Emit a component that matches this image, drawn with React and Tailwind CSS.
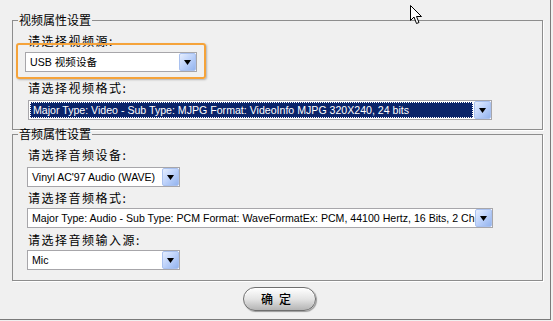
import React from 'react';

const cjk = "font-['SimSun','Noto_Sans_CJK_SC',sans-serif]";
const latin = "font-['Liberation_Sans','Noto_Sans_CJK_SC',sans-serif]";

const ArrowButton = () => (
  <div className="flex w-[17px] shrink-0 items-center justify-center rounded-[2px] border border-[#a9c1ef] bg-gradient-to-br from-[#e6eefe] via-[#bcd1fa] to-[#94b4ee]">
    <svg width="7" height="5" viewBox="0 0 7 5">
      <path d="M0 0 H7 L3.5 5 Z" fill="#000" />
    </svg>
  </div>
);

const Combo = ({ width, text, selected }) => (
  <div className={`flex h-[20px] ${width} border border-[#a7a6aa] bg-white`}>
    {selected ? (
      <div className="m-[1px] flex-1 overflow-hidden bg-[#0a246a] outline-1 outline-dotted outline-white -outline-offset-1">
        <div className={`${latin} whitespace-nowrap pl-[3px] text-[10.6px] leading-[16px] text-white`}>{text}</div>
      </div>
    ) : (
      <div className={`${latin} flex-1 overflow-hidden whitespace-nowrap pl-[4px] text-[10.6px] leading-[18px] text-black`}>
        {text}
      </div>
    )}
    <ArrowButton />
  </div>
);

const Label = ({ children, className = '' }) => (
  <div className={`${cjk} ml-[15px] text-[12px] leading-[14px] tracking-[1.5px] text-black ${className}`}>{children}</div>
);

const Group = ({ title, className = '', children }) => (
  <fieldset className={`w-[531px] border border-[#8d8d8d] shadow-[1px_1px_0_#ffffff] ${className}`}>
    <legend className={`${cjk} ml-[5px] px-[1px] text-[12px] leading-[14px] text-black`}>{title}</legend>
    {children}
  </fieldset>
);

export default function App() {
  return (
    <div className="relative h-[321px] w-[553px] overflow-hidden bg-[#f0f0f0]">
      <div className="flex h-[320px] w-[551px] flex-col border-r border-b border-[#7a7a7a] pl-[12px] pt-[13px]">
        <Group title="视频属性设置" className="h-[117px]">
          <Label className="mt-[7px]">请选择视频源:</Label>
          <div className="ml-[12px] mt-[4px]">
            <Combo width="w-[172px]" text="USB 视频设备" />
          </div>
          <Label className="mt-[9px]">请选择视频格式:</Label>
          <div className="ml-[15px] mt-[5px]">
            <Combo width="w-[464px]" text="Major Type: Video - Sub Type: MJPG Format: VideoInfo MJPG 320X240, 24 bits" selected />
          </div>
        </Group>

        <Group title="音频属性设置" className="mt-[-3px] h-[154px]">
          <Label className="mt-[7px]">请选择音频设备:</Label>
          <div className="ml-[14px] mt-[5px]">
            <Combo width="w-[153px]" text="Vinyl AC'97 Audio (WAVE)" />
          </div>
          <Label className="mt-[4px]">请选择音频格式:</Label>
          <div className="ml-[14px] mt-[3px]">
            <Combo width="w-[466px]" text="Major Type: Audio - Sub Type: PCM Format: WaveFormatEx: PCM, 44100 Hertz, 16 Bits, 2 Ch" />
          </div>
          <Label className="mt-[5px]">请选择音频输入源:</Label>
          <div className="ml-[14px] mt-[3px]">
            <Combo width="w-[153px]" text="Mic" />
          </div>
        </Group>

        <div className="mt-[6px] flex w-[531px] justify-center">
          <button className={`${cjk} ml-[3px] h-[24px] w-[73px] rounded-full border border-[#6f6f6f] bg-gradient-to-b from-[#ffffff] via-[#e4e4e4] to-[#b4b4b4] text-[12px] font-medium tracking-[6px] text-black shadow-[inset_0_1px_1px_#ffffff,1px_1px_1px_#9a9a9a]`}>
            确定
          </button>
        </div>
      </div>

      {/* focus highlight around the video source picker */}
      <div className="pointer-events-none absolute left-[16px] top-[43px] h-[36px] w-[190px] rounded-[3px] border-2 border-[#f5a33a] shadow-[1px_1px_2px_rgba(0,0,0,0.25)]" />

      {/* mouse cursor */}
      <svg className="absolute left-[410px] top-[5px]" width="13" height="20" viewBox="0 0 13 20">
        <path d="M0.5 0.5 L0.5 15.5 L4 12 L6.5 18.5 L9 17.5 L6.5 11.5 L11.5 11.5 Z" fill="#fff" stroke="#000" strokeWidth="1" />
      </svg>
    </div>
  );
}
